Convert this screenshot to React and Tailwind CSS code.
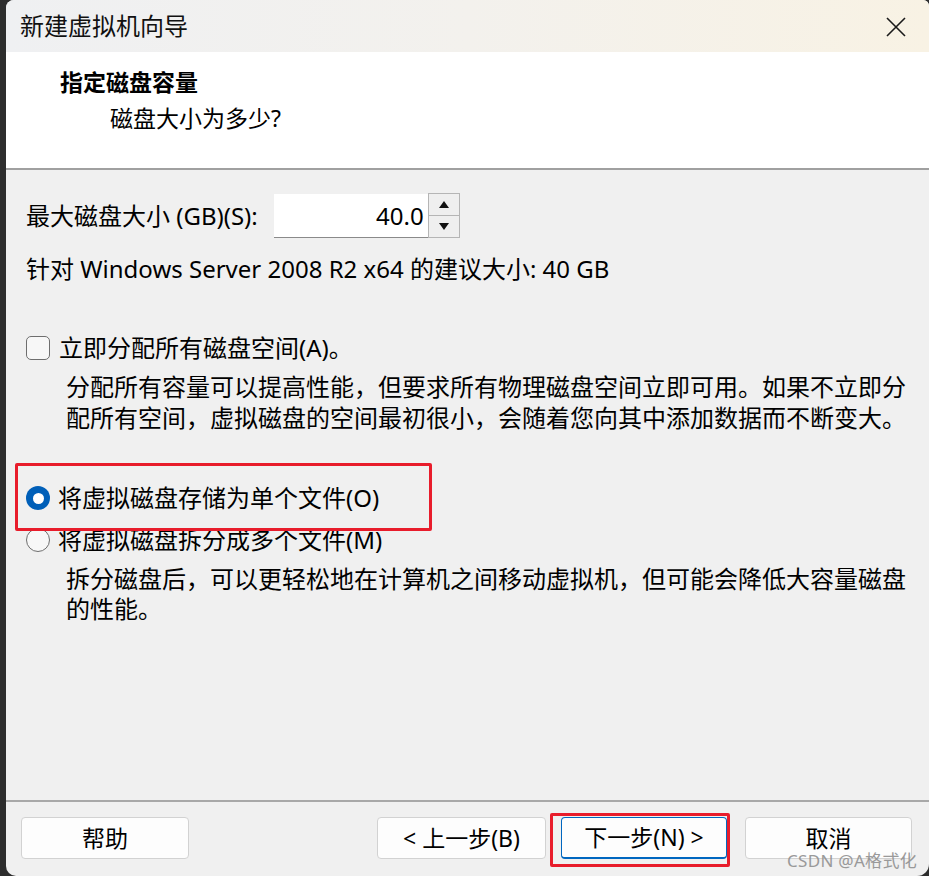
const cjk = { fontFamily: '"Noto Sans", "Noto Sans CJK SC", sans-serif' };

const Checkbox = () => (
  <span className="inline-block w-[24px] h-[24px] rounded-[5px] border-[1.5px] border-[#6e6e6e] bg-[#f7f7f7] shrink-0" />
);

const Radio = ({ checked }) =>
  checked ? (
    <span className="flex items-center justify-center w-[24px] h-[24px] rounded-full bg-[#005fb8] shrink-0">
      <span className="w-[11px] h-[11px] rounded-full bg-white" />
    </span>
  ) : (
    <span className="inline-block w-[24px] h-[24px] rounded-full border-[1.5px] border-[#6e6e6e] bg-[#f7f7f7] shrink-0" />
  );

const Button = ({ children, className = "" }) => (
  <button
    className={
      "h-[42px] rounded-[4px] bg-[#fdfdfd] text-[23px] text-black flex items-center justify-center " +
      className
    }
  >
    {children}
  </button>
);

export default function App() {
  return (
    <div className="w-[929px] h-[876px] bg-[#2d2d2d] overflow-hidden" style={cjk}>
      <div className="ml-[6px] h-full bg-[#f0f0f0] rounded-tl-[8px] rounded-bl-[10px] rounded-tr-[6px] rounded-br-[12px] overflow-hidden flex flex-col relative">
        {/* title bar */}
        <div className="h-[52px] shrink-0 flex items-center justify-between pl-[14px] pr-[22px] bg-gradient-to-r from-[#eff0f2] via-[#f3f1ed] to-[#f8f2e4]">
          <span className="text-[24px] text-[#111]">新建虚拟机向导</span>
          <svg width="22" height="22" viewBox="0 0 22 22" className="mt-[2px]">
            <path d="M2 2 L20 20 M20 2 L2 20" stroke="#1a1a1a" strokeWidth="1.6" fill="none" />
          </svg>
        </div>

        {/* header */}
        <div className="h-[118px] shrink-0 bg-white border-b-2 border-[#a0a0a0] pl-[54px] pt-[12px]">
          <div className="text-[23px] font-bold text-black leading-[36px]">指定磁盘容量</div>
          <div className="text-[23px] text-black leading-[36px] pl-[50px]">磁盘大小为多少?</div>
        </div>

        {/* body */}
        <div className="flex-1 pl-[20px] pr-[20px] relative">
          <div className="flex items-center mt-[23px] h-[45px]">
            <span className="text-[24px] text-black">最大磁盘大小 (GB)(S):</span>
            <div className="ml-[16px] flex h-[45px]">
              <div className="w-[154px] h-[45px] bg-white border-t border-[#f0f0f0] border-b-[1.5px] border-b-[#8a8a8a] flex items-center justify-end pr-[4px] text-[24px] text-black">
                40.0
              </div>
              <div className="w-[32px] flex flex-col border border-[#b5b5b5] bg-[#e8e8e8]">
                <div className="flex-1 flex items-center justify-center border-b border-[#b5b5b5] bg-[#efefef]">
                  <svg width="10" height="7" viewBox="0 0 10 7">
                    <path d="M5 0 L10 7 L0 7 Z" fill="#111" />
                  </svg>
                </div>
                <div className="flex-1 flex items-center justify-center bg-[#efefef]">
                  <svg width="10" height="7" viewBox="0 0 10 7">
                    <path d="M0 0 L10 0 L5 7 Z" fill="#111" />
                  </svg>
                </div>
              </div>
            </div>
          </div>

          <div className="mt-[15px] text-[24px] text-black leading-[31px]">
            针对 Windows Server 2008 R2 x64 的建议大小: 40 GB
          </div>

          <div className="mt-[48px] flex items-center gap-[9px]">
            <Checkbox />
            <span className="text-[24px] text-black leading-[31px]">立即分配所有磁盘空间(A)。</span>
          </div>
          <div className="mt-[8px] pl-[40px] text-[24px] text-black leading-[31px] w-[900px]">
            分配所有容量可以提高性能，但要求所有物理磁盘空间立即可用。如果不立即分
            <br />
            配所有空间，虚拟磁盘的空间最初很小，会随着您向其中添加数据而不断变大。
          </div>

          <div className="mt-[49px] flex items-center gap-[8px] h-[32px]">
            <Radio checked />
            <span className="text-[24px] text-black">将虚拟磁盘存储为单个文件(O)</span>
          </div>
          <div className="mt-[10px] flex items-center gap-[8px] h-[32px]">
            <Radio />
            <span className="text-[24px] text-black">将虚拟磁盘拆分成多个文件(M)</span>
          </div>
          <div className="mt-[8px] pl-[40px] text-[24px] text-black leading-[30px] w-[900px]">
            拆分磁盘后，可以更轻松地在计算机之间移动虚拟机，但可能会降低大容量磁盘
            <br />
            的性能。
          </div>

          {/* annotation box */}
          <div className="absolute left-[9px] top-[293px] w-[417px] h-[68px] border-[3px] border-[#e81c2b] rounded-[2px]" />
        </div>

        {/* footer */}
        <div className="h-[76px] shrink-0 border-t-2 border-[#a8a8a8] flex items-start pt-[15px] pl-[15px] pr-[17px] relative">
          <Button className="w-[168px] border border-[#d2d2d2]">帮助</Button>
          <div className="flex-1" />
          <Button className="w-[169px] border border-[#d2d2d2]">&lt; 上一步(B)</Button>
          <Button className="w-[166px] ml-[15px] border border-[#0067c0] border-b-2">下一步(N) &gt;</Button>
          <Button className="w-[167px] ml-[18px] border border-[#d2d2d2]">取消</Button>

          <div className="absolute left-[544px] top-[11px] w-[180px] h-[54px] border-[3px] border-[#e81c2b] rounded-[2px]" />
          <div className="absolute right-[12px] top-[46px] text-[17px] text-[#8f8f8f] opacity-90 tracking-[0.3px]">
            CSDN @A格式化
          </div>
        </div>
      </div>
    </div>
  );
}
